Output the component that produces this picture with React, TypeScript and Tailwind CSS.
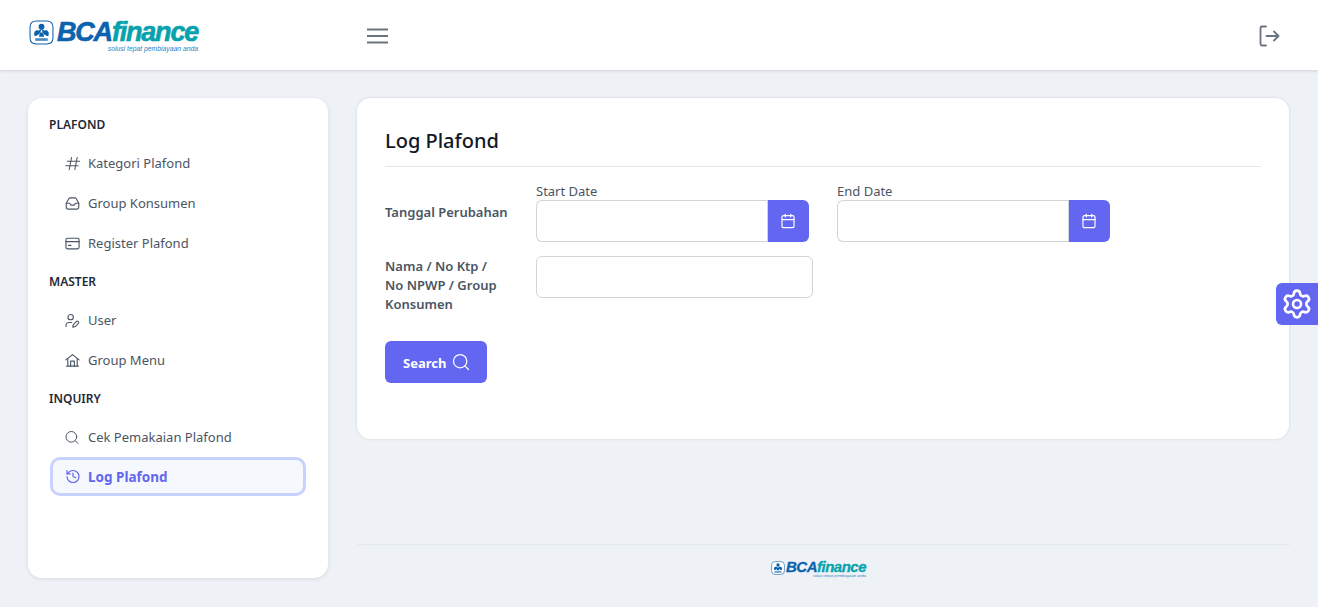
import React from "react";
import { UserPen, History, Search, Calendar, Settings } from "lucide-react";

const font = { fontFamily: '"Noto Sans", sans-serif' };

function Logo({ small }: { small?: boolean }) {
  return (
    <div className={small ? "flex items-start gap-[1px] w-[96px] h-[20px]" : "flex items-start gap-[3px] w-[170px] h-[34px]"}>
      <svg viewBox="0 0 24 24" className={small ? "w-[14px] h-[14px] mt-[1px] shrink-0" : "w-[25px] h-[25px] shrink-0"}>
        <path d="M7 1h10q6 0 6 6v10q0 6-6 6H7q-6 0-6-6V7q0-6 6-6z" fill="#fff" stroke="#0b62ad" strokeWidth="1" strokeLinejoin="round" />
        <circle cx="12" cy="6.500" r="2.800" fill="#0b62ad" />
        <path d="M12 8c-.6 4-2.400 7-6.500 7.500C4 12 6 9.500 8.500 10c1.500.3 2.500-.8 3.500-2zm0 0c.6 4 2.400 7 6.500 7.500C20 12 18 9.500 15.500 10c-1.500.3-2.500-.8-3.500-2z" fill="#0b62ad" />
        <path d="M10.500 12h3l1 4h-5z" fill="#0b62ad" />
        <rect x="6" y="17.500" width="12" height="2.500" fill="#0b62ad" opacity="0.75" />
      </svg>
      <div className="flex flex-col items-end">
        <div
          className={
            small
              ? "text-[15px] leading-[14px] font-bold italic tracking-[-0.5px] whitespace-nowrap [-webkit-text-stroke:0.3px]"
              : "text-[27px] leading-[25px] font-bold italic tracking-[-1.2px] whitespace-nowrap [-webkit-text-stroke:0.6px]"
          }
          style={{ fontFamily: '"Liberation Sans", sans-serif' }}
        >
          <span className="text-[#0b62ad]">BCA</span>
          <span className="text-[#07a2ae]">finance</span>
        </div>
        <div
          className={
            small
              ? "text-[4px] leading-[4px] italic text-[#2b7fc4] whitespace-nowrap"
              : "text-[6.800px] leading-[7px] italic text-[#2b7fc4] whitespace-nowrap"
          }
          style={{ fontFamily: '"Liberation Sans", sans-serif' }}
        >
          solusi tepat pembiayaan anda
        </div>
      </div>
    </div>
  );
}

const HashIcon = () => (
  <svg viewBox="0 0 16 16" className="w-[15px] h-[15px]" fill="none" stroke="currentColor" strokeWidth="1.100" strokeLinecap="round">
    <path d="M2.500 5.500h13M.8 10.500h13M7 1.500 4.500 14.500M13 1.500l-2.500 13" />
  </svg>
);
const InboxIcon = () => (
  <svg viewBox="0 0 24 24" className="w-[15px] h-[15px]" fill="none" stroke="currentColor" strokeWidth="1.800" strokeLinecap="round" strokeLinejoin="round">
    <path d="M2 11.500 6 4.500c.5-.8 1.200-1.500 2.500-1.500h7c1.300 0 2 .7 2.500 1.500l4 7V18a3 3 0 0 1-3 3H5a3 3 0 0 1-3-3z" />
    <path d="M2 11.500h5l2.500 3h5l2.500-3h5" />
  </svg>
);
const CardIcon = () => (
  <svg viewBox="0 0 24 24" className="w-[15px] h-[15px]" fill="none" stroke="currentColor" strokeWidth="1.800" strokeLinecap="round" strokeLinejoin="round">
    <rect x="1.500" y="3.500" width="21" height="17" rx="2.500" />
    <path d="M1.500 9h21M5.500 15h4" />
  </svg>
);
const HomeIcon = () => (
  <svg viewBox="0 0 24 24" className="w-[15px] h-[15px]" fill="none" stroke="currentColor" strokeWidth="1.800" strokeLinecap="round" strokeLinejoin="round">
    <path d="M1.500 11 12 2.500 22.500 11" />
    <path d="M4.500 9v12h15V9M2.500 21h19" />
    <path d="M9 21v-8h6v8" />
  </svg>
);

type Item = { label: string; icon: React.ReactNode; active?: boolean };
const groups: { title: string; items: Item[] }[] = [
  {
    title: "PLAFOND",
    items: [
      { label: "Kategori Plafond", icon: <HashIcon /> },
      { label: "Group Konsumen", icon: <InboxIcon /> },
      { label: "Register Plafond", icon: <CardIcon /> },
    ],
  },
  {
    title: "MASTER",
    items: [
      { label: "User", icon: <UserPen size={17} strokeWidth={1.600} /> },
      { label: "Group Menu", icon: <HomeIcon /> },
    ],
  },
  {
    title: "INQUIRY",
    items: [
      { label: "Cek Pemakaian Plafond", icon: <Search size={19} strokeWidth={1.500} /> },
      { label: "Log Plafond", icon: <History size={19} strokeWidth={1.800} />, active: true },
    ],
  },
];

function DateField({ label }: { label: string }) {
  return (
    <div className="flex flex-col">
      <div className="text-[13px] leading-[18px] text-[#4b5563] h-[18px] -mt-[9px]">{label}</div>
      <div className="flex h-[42px] w-[273px]">
        <div className="w-[231px] h-full rounded-l-[6px] border border-r-0 border-[#d1d5db] bg-white" />
        <div className="w-[42px] h-full rounded-r-[6px] bg-[#6366f1] flex items-center justify-center text-white border-l border-[#d1d5db] pr-[2px]">
          <Calendar size={16} strokeWidth={1.800} />
        </div>
      </div>
    </div>
  );
}

export default function App() {
  return (
    <div className="relative h-[607px] overflow-hidden bg-[#eef2f7] flex flex-col" style={font}>
      <header className="h-[70px] shrink-0 bg-white shadow-[0_1px_3px_rgba(0,0,0,0.14)] flex items-center pl-[29px] pr-[37px] pt-[2px] z-10">
        <div className="w-[338px] pt-[1px]">
          <Logo />
        </div>
        <svg viewBox="0 0 21 16" className="w-[21px] h-[16px] text-[#6b7280]" fill="none" stroke="currentColor" strokeWidth="2">
          <path d="M0 1.500h21M0 8h21M0 14.500h21" />
        </svg>
        <div className="flex-1" />
        <svg viewBox="0 0 24 24" className="w-[24px] h-[24px] text-[#6b7280]" fill="none" stroke="currentColor" strokeWidth="1.800" strokeLinecap="round" strokeLinejoin="round">
          <path d="M9 2.500H5A1.500 1.500 0 0 0 3.500 4v16A1.500 1.500 0 0 0 5 21.500h4" />
          <path d="M9.500 12h12M17 7.500l4.500 4.500-4.500 4.500" />
        </svg>
      </header>

      <div className="flex-1 flex gap-[29px] pl-[28px] pr-[28px] pt-[28px]">
        <aside className="w-[300px] mb-[29px] shrink-0 rounded-[14px] bg-white shadow-[0_1px_4px_rgba(0,0,0,0.1)] px-[21px] pt-[17px]">
          {groups.map((g) => (
            <div key={g.title} className="mb-[9px]">
              <div className="h-[20px] flex items-center text-[12px] font-semibold text-[#1f2937]">{g.title}</div>
              <div className="mt-[10px] flex flex-col gap-[2px]">
                {g.items.map((it) => (
                  <div
                    key={it.label}
                    className={
                      it.active
                        ? "h-[39px] w-[256px] ml-[1px] -mt-[2px] pl-[12px] pt-[2px] flex items-center gap-[7px] rounded-[10px] bg-[#f5f8fc] border-[3px] border-[#c7d2fe] text-[#6366f1] font-bold text-[13.500px]"
                        : "h-[38px] pl-[15px] flex items-center gap-[8px] text-[13px] text-[#4b5563]"
                    }
                  >
                    <span className="w-[16px] h-[16px] flex items-center justify-center shrink-0 -translate-y-[1px]">{it.icon}</span>
                    <span>{it.label}</span>
                  </div>
                ))}
              </div>
            </div>
          ))}
        </aside>

        <main className="flex-1 flex flex-col min-w-0">
          <section className="h-[341px] mr-[1px] rounded-[14px] bg-white shadow-[0_0_3px_rgba(0,0,0,0.12)] px-[28px] pt-[28px]">
            <h1 className="text-[20px] leading-[30px] font-medium text-[#111827] pb-[10px] border-b border-[#e2e8f0]">Log Plafond</h1>
            <div className="mt-[24px] flex items-start">
              <div className="w-[151px] h-[42px] pt-[2px] flex items-center text-[13px] font-semibold text-[#4b5563]">Tanggal Perubahan</div>
              <div className="flex gap-[28px]">
                <DateField label="Start Date" />
                <DateField label="End Date" />
              </div>
            </div>
            <div className="mt-[14px] flex items-start">
              <div className="w-[151px] pr-[30px] pt-[1px] text-[13px] leading-[19px] font-semibold text-[#4b5563]">
                Nama / No Ktp / No NPWP / Group Konsumen
              </div>
              <div className="w-[277px] h-[42px] rounded-[6px] border border-[#d1d5db] bg-white" />
            </div>
            <button className="mt-[27px] w-[102px] h-[42px] rounded-[6px] bg-[#6366f1] text-white text-[13px] font-bold flex items-center pl-[18px] gap-[5px]">
              <span className="pt-[3px]">Search</span> <Search size={20} strokeWidth={1.500} />
            </button>
          </section>
          <div className="flex-1" />
          <footer className="h-[63px] border-t border-[#e2e8f0] flex justify-center pt-[15px] pr-[9px]">
            <Logo small />
          </footer>
        </main>
      </div>

      <div className="absolute right-0 top-[283px] w-[42px] h-[42px] rounded-l-[6px] bg-[#6366f1] flex items-center justify-center text-white z-20">
        <Settings size={32} strokeWidth={2} />
      </div>
    </div>
  );
}
